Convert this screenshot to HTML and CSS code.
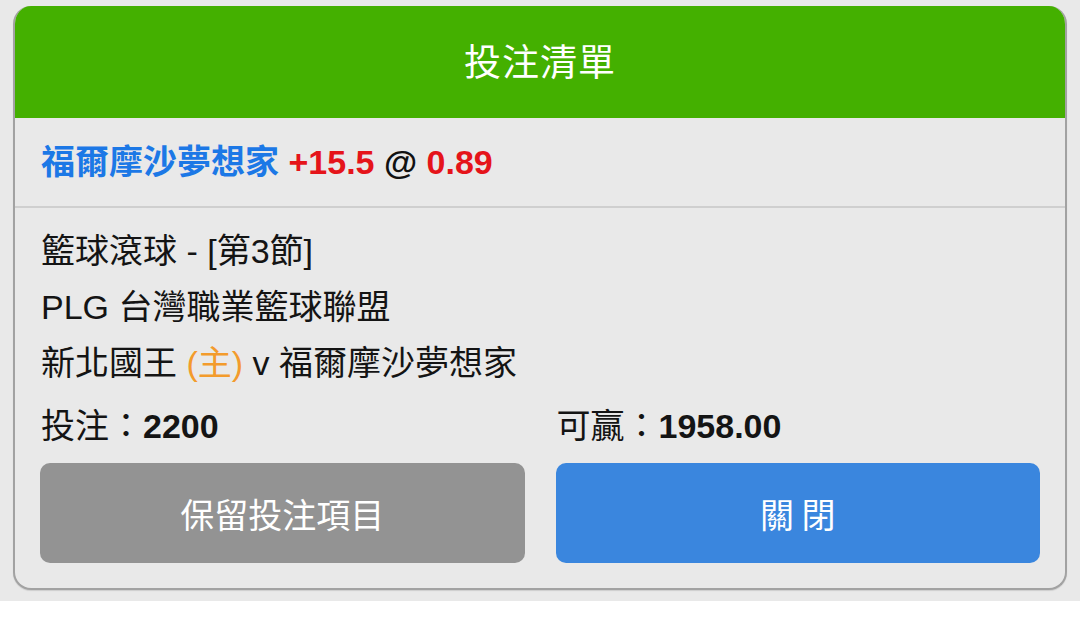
FILE: index.html
```html
<!DOCTYPE html>
<html lang="zh-Hant">
<head>
<meta charset="utf-8">
<title>投注清單</title>
<link rel="stylesheet" href="styles.css">
</head>
<body>
<div class="screen">
  <div class="card">
    <div class="card-header">投注清單</div>
    <div class="selection"><span class="team">福爾摩沙夢想家</span> <span class="line">+15.5</span> <span class="at">@</span> <span class="odds">0.89</span></div>
    <div class="details">
      <div class="info">
        <div class="info-line">籃球滾球 - [第3節]</div>
        <div class="info-line">PLG 台灣職業籃球聯盟</div>
        <div class="info-line">新北國王 <span class="home">(主)</span> v 福爾摩沙夢想家</div>
      </div>
      <div class="amounts">
        <div class="amount">投注：<b>2200</b></div>
        <div class="amount">可贏：<b>1958.00</b></div>
      </div>
      <div class="actions">
        <button class="btn btn-keep">保留投注項目</button>
        <button class="btn btn-close">關 閉</button>
      </div>
    </div>
  </div>
</div>
</body>
</html>
```

FILE: styles.css
```css
html, body {
  margin: 0;
  padding: 0;
  background: #ffffff;
}

body {
  font-family: "Liberation Sans", "Noto Sans CJK TC", "Noto Sans", sans-serif;
  color: #141414;
}

.screen {
  background: #e9e9e9;
  height: 601px;
  box-sizing: border-box;
  padding: 6px 13px 0 13px;
}

.card {
  border: 2px solid #a2a2a2;
  border-top: none;
  border-radius: 18px;
  overflow: hidden;
  background: #e9e9e9;
  box-shadow: 0 1px 1px rgba(0, 0, 0, 0.12);
}

.card-header {
  background: #44b000;
  color: #ffffff;
  height: 112px;
  box-sizing: border-box;
  padding-bottom: 4px;
  margin: 0 -2px;
  display: flex;
  align-items: center;
  justify-content: center;
  font-family: "Noto Sans CJK TC", sans-serif;
  font-size: 37px;
  letter-spacing: 1px;
}

.selection {
  height: 88px;
  line-height: 88px;
  border-bottom: 2px solid #cfcfcf;
  padding-left: 26px;
  font-size: 34px;
  font-weight: 700;
  white-space: nowrap;
}

.team { color: #1c78e6; }
.line, .odds { color: #e5141a; }
.at { color: #111111; }

.details {
  padding: 15px 25px 25px 25px;
}

.info-line {
  font-size: 34px;
  line-height: 56px;
  white-space: nowrap;
  padding-left: 1px;
}

.home { color: #f39b2c; }

.amounts {
  margin-top: 7px;
  display: grid;
  grid-template-columns: 1fr 1fr;
  column-gap: 31px;
}

.amount {
  font-size: 34px;
  line-height: 56px;
  padding-left: 1px;
}

.amount b { font-weight: 700; }

.actions {
  margin-top: 9px;
  display: grid;
  grid-template-columns: 1fr 1fr;
  column-gap: 31px;
}

.btn {
  height: 100px;
  border: none;
  border-radius: 10px;
  color: #ffffff;
  font-family: "Noto Sans CJK TC", sans-serif;
  font-size: 34px;
  padding: 0;
}

.btn-keep { background: #939393; }
.btn-close { background: #3a86de; }
```
